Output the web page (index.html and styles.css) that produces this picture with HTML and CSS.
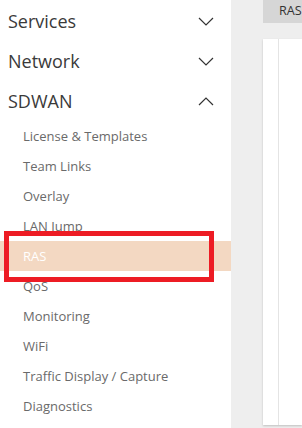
FILE: index.html
```html
<!DOCTYPE html>
<html>
<head>
<meta charset="utf-8">
<link rel="stylesheet" href="styles.css">
</head>
<body>
<div class="app">
  <nav class="sidebar">
    <div class="group">
      <span>Services</span>
      <svg class="chev" width="16" height="9" viewBox="0 0 16 9"><path d="M1 1 L8 8 L15 1" fill="none" stroke="#333" stroke-width="1.2"/></svg>
    </div>
    <div class="group">
      <span>Network</span>
      <svg class="chev" width="16" height="9" viewBox="0 0 16 9"><path d="M1 1 L8 8 L15 1" fill="none" stroke="#333" stroke-width="1.2"/></svg>
    </div>
    <div class="group">
      <span>SDWAN</span>
      <svg class="chev" width="16" height="9" viewBox="0 0 16 9"><path d="M1 8 L8 1 L15 8" fill="none" stroke="#333" stroke-width="1.2"/></svg>
    </div>
    <ul class="sub">
      <li>License &amp; Templates</li>
      <li>Team Links</li>
      <li>Overlay</li>
      <li>LAN Jump</li>
      <li class="active">RAS<span class="mark"></span></li>
      <li>QoS</li>
      <li>Monitoring</li>
      <li>WiFi</li>
      <li>Traffic Display / Capture</li>
      <li>Diagnostics</li>
    </ul>
  </nav>
  <main class="main">
    <div class="tabs"><div class="tab">RAS</div></div>
    <div class="panel"><div class="panel-inner"></div></div>
  </main>
</div>
</body>
</html>
```

FILE: styles.css
```css
html, body {
  margin: 0;
  padding: 0;
}
body {
  width: 302px;
  height: 428px;
  overflow: hidden;
  font-family: "Open Sans", "Noto Sans", sans-serif;
}
.app {
  display: flex;
  height: 428px;
  overflow: hidden;
}
.sidebar {
  width: 231px;
  flex: none;
  background: #fff;
  padding-top: 1px;
}
.group {
  height: 40px;
  display: flex;
  align-items: center;
  justify-content: space-between;
  padding: 0 17px 0 8px;
  font-size: 18px;
  color: #3a3a3a;
}
.chev {
  display: block;
}
.sub {
  list-style: none;
  margin: 0;
  padding: 0;
}
.sub li {
  height: 30px;
  line-height: 30px;
  padding-left: 23px;
  font-size: 13px;
  color: #6a6a6a;
  position: relative;
}
.sub li.active {
  background: #f3d8c2;
  color: #fff;
}
.mark {
  position: absolute;
  left: 4px;
  top: -10px;
  width: 200px;
  height: 41px;
  border: 5px solid #ed1c24;
}
.main {
  flex: 1;
  min-width: 0;
  background: #eeeeee;
  padding-left: 32px;
  display: flex;
  flex-direction: column;
  overflow: hidden;
}
.tabs {
  display: flex;
}
.tab {
  background: #d6d6d6;
  height: 23px;
  line-height: 22px;
  padding-left: 16px;
  font-size: 12.6px;
  color: #333;
  flex: 1;
}
.panel {
  margin-top: 16px;
  height: 386px;
  background: #fff;
  box-shadow: 0 1px 2px rgba(0,0,0,0.2);
  padding-left: 15px;
  display: flex;
}
.panel-inner {
  flex: 1;
  border-left: 1px solid #e4e4e4;
}
```
